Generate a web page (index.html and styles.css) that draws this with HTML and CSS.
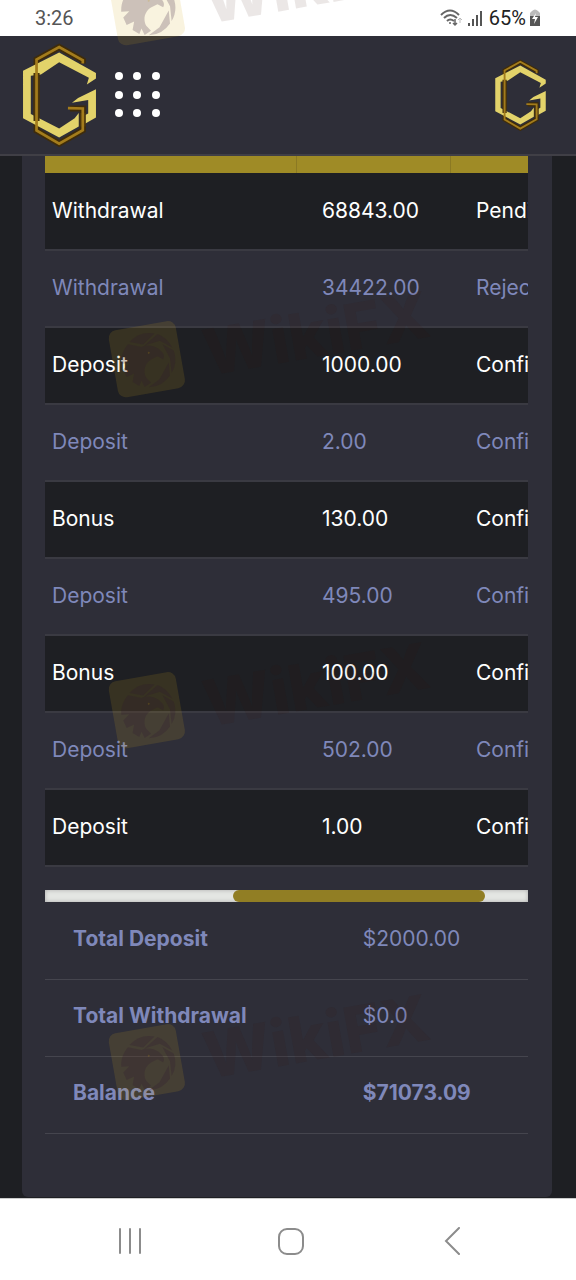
FILE: index.html
```html
<!DOCTYPE html>
<html lang="en">
<head>
  <meta charset="UTF-8">
  <title>Transactions</title>
  <meta name="viewport" content="width=device-width, initial-scale=1.0">
  <link rel="stylesheet" href="styles.css">
</head>
<body>

<svg class="defs" width="0" height="0">
  <symbol id="logo" viewBox="24 15 222 308">
    <path d="M204 76V66L134 27L67 64V274L134 313L204 273V209H166" fill="none" stroke="#3f2c0a" stroke-width="18"/>
    <path d="M27 97L134 43L243 104V120L216 138L222 118L134 72L80 108L50 112V225L134 268L180 238L192 222V262L134 295L27 238Z" fill="#e3d36a"/>
    <path d="M243 152V236L204 258V232L220 224V184L172 192L190 178Z" fill="#e3d36a"/>
    <path d="M67 104V246M204 222V262" fill="none" stroke="#4a350e" stroke-width="18"/>
    <path d="M204 76V66L134 27L67 64V274L134 313L204 273V209L160 208" fill="none" stroke="#a37c1c" stroke-width="8"/>
  </symbol>
  <symbol id="mark" viewBox="0 0 340 100" overflow="visible">
    <g transform="rotate(-10 50 50)">
      <path class="mark-tile" d="M23 15H75A8 8 0 0 1 83 23V75A8 8 0 0 1 75 83H23A8 8 0 0 1 15 75V23A8 8 0 0 1 23 15Z"/>
      <g class="mark-bird">
        <path d="M35 29A27 27 0 0 1 61 25L48 34Z"/>
        <path d="M64 26A27 27 0 0 1 76 42L65 33L49 35Z"/>
        <path d="M77 45A27 27 0 0 1 71 67L72 52L67 37Z"/>
        <path d="M69 69A27 27 0 0 1 46 77L58 71L70 56Z"/>
        <path d="M33 31L46 36C53 34 61 38 64 43C67 46 67 50 65 52L60 48L53 50C46 53 43 60 45 67L49 73L42 76L40 69L37 74L31 69L34 61L26 63L24 55L31 50L23 49C24 41 28 35 33 31Z"/>
      </g>
      <circle class="mark-eye" cx="52" cy="43" r="1"/>
    </g>
    <text class="mark-text" x="110" y="66" transform="rotate(-10 110 66)">WikiFX</text>
  </symbol>
</svg>

<div class="status-bar">
  <span class="time">3:26</span>
  <div class="status-icons">
    <svg width="24" height="20" viewBox="0 0 24 20" fill="none" stroke="#666" stroke-width="2">
      <path d="M1 7Q10 -2 19 7M4 10Q10 4 17 10M7 13Q10 10 14 13"/>
      <path d="M15 11V17M13 15L15 17L17 15" stroke-width="1.5"/>
      <path d="M20 15V10M18 12L20 10L22 12" stroke="#bbb" stroke-width="1"/>
      <circle cx="10" cy="15" r="1" fill="#666" stroke="none"/>
    </svg>
    <svg width="16" height="18" viewBox="0 0 16 18" stroke="#555" stroke-width="2">
      <path d="M2 17V14M6 17V10M10 17V6M14 17V2"/>
    </svg>
    <span class="battery">65%</span>
    <svg width="12" height="18" viewBox="0 0 12 18">
      <path d="M3 2Q6 -1 9 2L11 4V8H1V4Z" fill="#bbb"/>
      <path d="M1 7H11V17H1Z" fill="#555"/>
      <path d="M7 4L3 10H6L5 15L9 8H6Z" fill="#fff"/>
    </svg>
  </div>
</div>

<header class="header">
  <a href="#" class="brand" aria-label="Home"><svg><use href="#logo"/></svg></a>
  <button class="menu-btn" aria-label="Menu">
    <svg width="46" height="46" viewBox="0 0 46 46" fill="#fff">
      <circle cx="5" cy="4" r="4"/><circle cx="23" cy="4" r="4"/><circle cx="42" cy="4" r="4"/>
      <circle cx="5" cy="23" r="4"/><circle cx="23" cy="23" r="4"/><circle cx="42" cy="23" r="4"/>
      <circle cx="5" cy="41" r="4"/><circle cx="23" cy="41" r="4"/><circle cx="42" cy="41" r="4"/>
    </svg>
  </button>
  <a href="#" class="profile" aria-label="Profile"><svg><use href="#logo"/></svg></a>
</header>

<main class="page">
  <div class="card">
    <div class="table-scroll">
      <table class="history">
        <thead>
          <tr><th></th><th></th><th></th></tr>
        </thead>
        <tbody>
          <tr><td>Withdrawal</td><td>68843.00</td><td>Pending</td></tr>
          <tr><td>Withdrawal</td><td>34422.00</td><td>Rejected</td></tr>
          <tr><td>Deposit</td><td>1000.00</td><td>Confirmed</td></tr>
          <tr><td>Deposit</td><td>2.00</td><td>Confirmed</td></tr>
          <tr><td>Bonus</td><td>130.00</td><td>Confirmed</td></tr>
          <tr><td>Deposit</td><td>495.00</td><td>Confirmed</td></tr>
          <tr><td>Bonus</td><td>100.00</td><td>Confirmed</td></tr>
          <tr><td>Deposit</td><td>502.00</td><td>Confirmed</td></tr>
          <tr><td>Deposit</td><td>1.00</td><td>Confirmed</td></tr>
        </tbody>
      </table>
    </div>
    <div class="scroll-track"><div class="scroll-thumb"></div></div>
    <table class="summary">
      <tr><th>Total Deposit</th><td>$2000.00</td></tr>
      <tr><th>Total Withdrawal</th><td>$0.0</td></tr>
      <tr class="balance"><th>Balance</th><td>$71073.09</td></tr>
    </table>
  </div>
</main>

<nav class="nav-bar">
  <button aria-label="Recent apps">
    <svg width="28" height="28" viewBox="0 0 28 28" fill="none" stroke="#8c8c8c" stroke-width="2" stroke-linecap="round"><path d="M4 2V26M14 2V26M24 2V26"/></svg>
  </button>
  <button aria-label="Home screen">
    <svg width="28" height="28" viewBox="0 0 28 28" fill="none" stroke="#8c8c8c" stroke-width="2"><rect x="1" y="2" width="24" height="25" rx="8"/></svg>
  </button>
  <button aria-label="Back">
    <svg width="28" height="28" viewBox="0 0 28 28" fill="none" stroke="#8c8c8c" stroke-width="2" stroke-linecap="round"><path d="M20 1L7 14L20 27"/></svg>
  </button>
</nav>

<svg class="watermark">
  <use href="#mark" x="98" y="-42" width="340" height="100"/>
  <use href="#mark" x="98" y="310" width="340" height="100"/>
  <use href="#mark" x="98" y="661" width="340" height="100"/>
  <use href="#mark" x="98" y="1013" width="340" height="100"/>
</svg>

</body>
</html>
```

FILE: styles.css
```css
* {
  box-sizing: border-box;
  margin: 0;
  padding: 0;
}

body {
  min-height: 100vh;
  background: #1e1f23;
  color: #7f88ba;
  font-family: Inter, sans-serif;
  font-size: 21px;
  display: flex;
  flex-direction: column;
  position: relative;
}

.defs {
  position: absolute;
}

button {
  border: none;
  background: transparent;
  cursor: pointer;
}

svg {
  display: block;
}

/* status bar */
.status-bar {
  height: 36px;
  padding: 0 35px;
  background: #fff;
  display: flex;
  justify-content: space-between;
  align-items: center;
  font-family: Roboto, sans-serif;
  font-size: 20px;
}

.time {
  color: #555;
}

.status-icons {
  display: flex;
  align-items: center;
  gap: 3px;
}

.battery {
  color: #222;
  padding-left: 3px;
}

/* header */
.header {
  height: 120px;
  padding: 0 29px 0 22px;
  background: #2e2e38;
  border-bottom: 2px solid #403f46;
  display: flex;
  align-items: center;
}

.brand svg {
  width: 75px;
  height: 104px;
}

.menu-btn {
  margin-left: 17px;
}

.profile {
  margin-left: auto;
}

.profile svg {
  width: 53px;
  height: 72px;
}

/* card */
.page {
  flex: 1;
  padding: 0 24px 1px 22px;
}

.card {
  height: 100%;
  padding: 0 24px 63px 23px;
  background: #2e2e38;
  border-radius: 0 0 6px 6px;
}

.table-scroll {
  overflow: hidden;
}

.history {
  width: 640px;
  table-layout: fixed;
  border-collapse: collapse;
}

.history th {
  height: 17px;
  width: 251px;
  background: #9f8b26;
  border-right: 1px solid #8b7923;
}

.history th:nth-child(2) {
  width: 154px;
}

.history th:last-child {
  width: auto;
}

.history td {
  height: 77px;
  padding: 0 26px 2px;
  border-bottom: 2px solid #3a3a42;
}

.history td:first-child {
  padding-left: 7px;
}

.history tbody tr:nth-child(odd) {
  background: #1e1f23;
  color: #fff;
}

.scroll-track {
  height: 12px;
  margin-top: 23px;
  background: #e4e6e3;
  box-shadow: inset 0 0 4px #aaa;
}

.scroll-thumb {
  width: 52%;
  height: 12px;
  margin-left: 39%;
  background: #917e24;
  border-radius: 6px;
}

.summary {
  width: 100%;
  table-layout: fixed;
  border-collapse: collapse;
}

.summary th,
.summary td {
  height: 77px;
  padding: 0 0 4px 28px;
  text-align: left;
  border-bottom: 1px solid #45454e;
}

.summary th {
  width: 60%;
}

.summary .balance td {
  font-weight: 700;
}

/* bottom navigation */
.nav-bar {
  height: 82px;
  padding: 2px 109px 0 116px;
  background: #fff;
  border-top: 1px solid #ccc;
  display: flex;
  justify-content: space-between;
  align-items: center;
}

/* watermark over the page */
.watermark {
  position: absolute;
  top: 0;
  left: 0;
  width: 100%;
  height: 100%;
  pointer-events: none;
}

.mark-tile {
  fill: rgba(210, 170, 30, 0.14);
}

.mark-bird {
  fill: rgba(45, 20, 50, 0.22);
}

.mark-eye {
  fill: rgba(200, 160, 20, 0.2);
}

.mark-text {
  fill: rgba(60, 20, 10, 0.1);
  font-family: Inter, sans-serif;
  font-size: 64px;
  font-weight: 800;
}
```
